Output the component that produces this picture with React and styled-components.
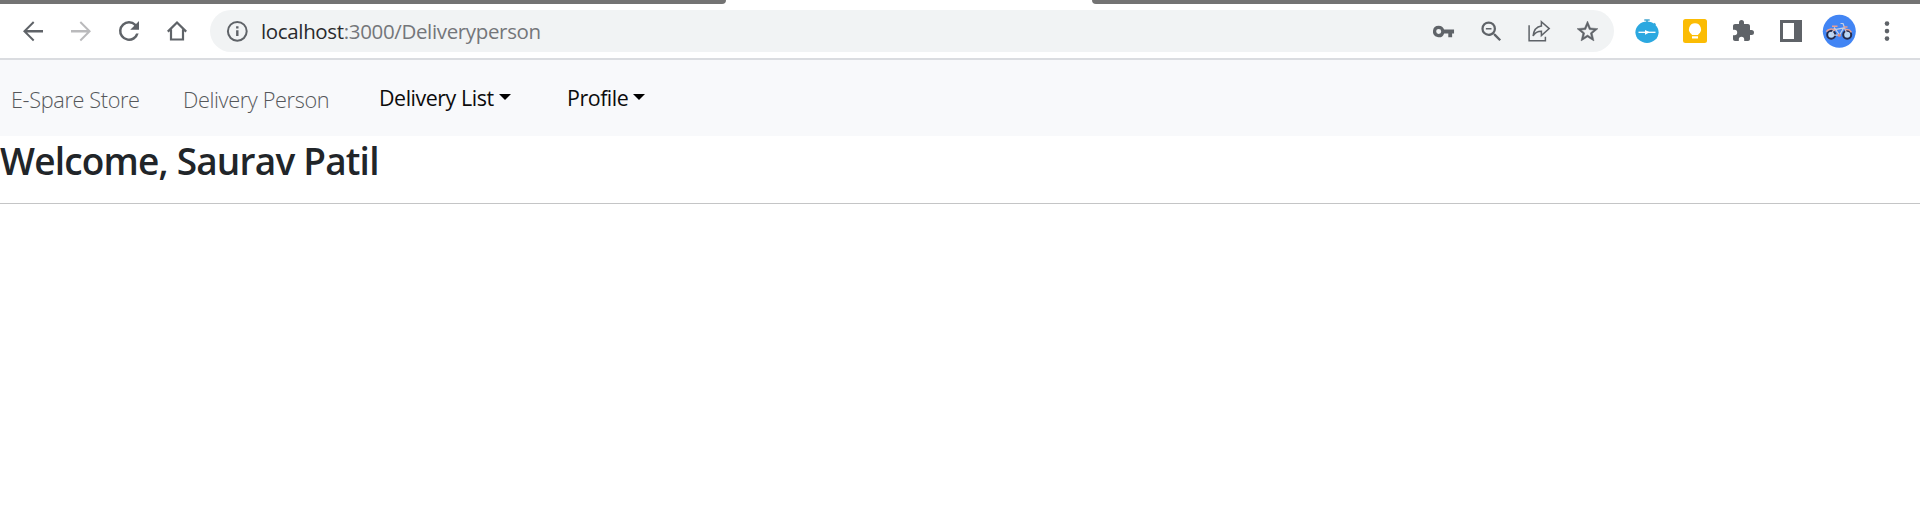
import React from "react";
import styled, { createGlobalStyle } from "styled-components";

const GlobalStyle = createGlobalStyle`
  * { box-sizing: border-box; }
  body {
    margin: 0;
    background: #fff;
    font-family: "Segoe UI", "Open Sans", "Noto Sans", sans-serif;
  }
`;

const Page = styled.div`
  display: flex;
  flex-direction: column;
  min-height: 531px;
  overflow: hidden;
`;

const TabStrip = styled.div`
  display: flex;
  height: 4px;
  background: #fff;
`;

const StripEdge = styled.div`
  width: ${(p) => p.$width}px;
  background: #737373;
  border-radius: ${(p) => (p.$side === "left" ? "0 0 5px 0" : "0 0 0 5px")};
`;

const ActiveTab = styled.div`
  flex: 1;
`;

const Toolbar = styled.header`
  display: flex;
  align-items: center;
  height: 56px;
  padding: 0 9px;
  border-bottom: 2px solid #dadce0;
`;

const Slot = styled.span`
  display: flex;
  flex: none;
  align-items: center;
  justify-content: center;
  width: 48px;
  height: 42px;
  color: ${(p) => (p.$muted ? "#bababc" : "#5f6368")};
  svg { display: block; overflow: visible; }
`;

const AddressBar = styled.div`
  display: flex;
  flex: 1;
  align-items: center;
  height: 42px;
  margin: 0 9px;
  padding: 0 3px;
  border-radius: 21px;
  background: #f1f3f4;
`;

const Url = styled.span`
  flex: 1;
  font-size: 20.5px;
  letter-spacing: ${(p) => p.$spacing}px;
  line-height: 42px;
  white-space: nowrap;
  color: #74767a;
`;

const Host = styled.span`
  color: #292a2d;
`;

const Navbar = styled.nav`
  display: flex;
  align-items: center;
  height: 76px;
  padding-left: 11px;
  background: #f8f9fb;
`;

const NavText = styled.span`
  width: ${(p) => p.$width}px;
  padding-top: 3px;
  font-size: 21.7px;
  font-weight: 300;
  letter-spacing: ${(p) => p.$spacing}px;
  line-height: 32px;
  white-space: nowrap;
  color: #55575a;
`;

const NavMenu = styled.a`
  display: flex;
  align-items: center;
  width: ${(p) => p.$width}px;
  padding-bottom: 1px;
  font-size: 21.4px;
  font-weight: 400;
  letter-spacing: ${(p) => p.$spacing}px;
  line-height: 32px;
  white-space: nowrap;
  color: #0c0c0c;
  &::after {
    content: "";
    margin: 0 0 1px 5px;
    border: 6.5px solid transparent;
    border-top-color: #000;
    border-bottom: 0;
  }
`;

const Heading = styled.h2`
  height: 68px;
  margin: 0;
  border-bottom: 1px solid #c4c5c6;
  font-size: 37px;
  font-weight: 600;
  letter-spacing: ${(p) => p.$spacing}px;
  line-height: 49px;
  white-space: nowrap;
  color: #212529;
`;

const Glyph = ({ d, size = 30, weight = 0 }) => (
  <svg width={size} height={size} viewBox="0 0 24 24" fill="currentColor" stroke="currentColor" strokeWidth={weight}>
    <path d={d} />
  </svg>
);

const paths = {
  back: "M20 11.2H7.3l5.8-5.8L12 4.2 4 12.2l8 8 1.1-1.2-5.8-5.9H20z",
  forward: "M4 11.2h12.7l-5.8-5.8L12 4.2l8 8-8 8-1.1-1.2 5.8-5.9H4z",
  reload:
    "M17.65 6.35A7.96 7.96 0 0 0 12 4a8 8 0 1 0 7.73 10h-2.08A6 6 0 1 1 12 6c1.66 0 3.14.69 4.22 1.78L13 11h7V4z",
  key: "M12.65 10A5.99 5.99 0 0 0 7 6a6 6 0 1 0 5.65 8H17v4h4v-4h2v-4zM7 14.6a2.6 2.6 0 1 1 0-5.2 2.6 2.6 0 0 1 0 5.2z",
  zoomOut:
    "M15.5 14h-.79l-.28-.27A6.47 6.47 0 0 0 16 9.5 6.5 6.5 0 1 0 9.5 16c1.61 0 3.09-.59 4.23-1.57l.27.28v.79l5 4.99L20.49 19zm-6 0A4.5 4.5 0 1 1 9.5 5a4.5 4.5 0 0 1 0 9zM7 8.8h5v1.4H7z",
  star: "M22 9.24l-7.19-.62L12 2 9.19 8.63 2 9.24l5.46 4.73L5.82 21 12 17.27 18.18 21l-1.63-7.03zM12 15.4l-3.76 2.27 1-4.28-3.32-2.88 4.38-.38L12 6.1l1.71 4.04 4.38.38-3.32 2.88 1 4.28z",
  puzzle:
    "M20.5 11H19V7c0-1.1-.9-2-2-2h-4V3.5a2.5 2.5 0 0 0-5 0V5H4c-1.1 0-1.99.9-1.99 2v3.8H3.5a2.7 2.7 0 0 1 0 5.4H2V20c0 1.1.9 2 2 2h3.8v-1.5a2.7 2.7 0 0 1 5.4 0V22H17c1.1 0 2-.9 2-2v-4h1.5a2.5 2.5 0 0 0 0-5z",
};

const HomeIcon = () => (
  <svg width="20" height="20" viewBox="0 0 20 20" fill="none" stroke="currentColor" strokeWidth="2.2">
    <path d="M.8 10.6 10 1.5l9.2 9.1M4 8.5v10h12v-10" />
  </svg>
);

const InfoIcon = () => (
  <svg width="22" height="22" viewBox="0 0 22 22" fill="none" stroke="currentColor" strokeWidth="2">
    <circle cx="11.3" cy="11.3" r="9.4" />
    <path d="M11.3 10.3v5.6M11.3 6.2v2.3" strokeWidth="2.4" />
  </svg>
);

const ShareIcon = () => (
  <svg width="24" height="22" viewBox="0 0 24 22" fill="none" stroke="currentColor" strokeWidth="1.5">
    <path d="M2.1 5.2v15.6h16.3v-4.1" />
    <path d="M14.4 1.7 22.2 8.6 14.4 15.5v-4.2C10.7 11.3 8 12.6 6.1 16c.5-5.2 3.5-9.3 8.3-10z" />
  </svg>
);

const StopwatchIcon = () => (
  <svg width="24" height="24" viewBox="0 0 24 24">
    <path d="M9.3 1h5.4M12 1v3M19 4.4l1.5 1.4" stroke="#45a6cf" strokeWidth="1.6" />
    <ellipse cx="12" cy="13.3" rx="11.6" ry="10.7" fill="#2ba8e0" />
    <path d="M3.5 13.3h17" stroke="#fff" strokeWidth="1.3" />
    <path d="m10 10.9 4.8 2.4-4.8 2.4z" fill="#fff" />
  </svg>
);

const KeepIcon = () => (
  <svg width="24" height="24" viewBox="0 0 24 24">
    <rect width="24" height="24" rx="2.5" fill="#fbbc04" />
    <path d="M12 4.3a6 6 0 0 0-3.3 11V16h6.6v-.7a6 6 0 0 0-3.3-11zM9 17.3h6v2.1H9z" fill="#fff" />
  </svg>
);

const PanelIcon = () => (
  <svg width="22" height="22" viewBox="0 0 22 22" fill="currentColor">
    <path d="M0 0h22v22H0zM3 3v16h11V3z" fillRule="evenodd" />
  </svg>
);

const BikeAvatar = () => (
  <svg width="34" height="34" viewBox="0 0 34 34" fill="none">
    <circle cx="17.3" cy="17.3" r="16.5" fill="#4285f4" />
    <g fill="#b9d9f8" stroke="#252b4c" strokeWidth="2">
      <circle cx="9.2" cy="20.8" r="4" />
      <circle cx="25.2" cy="20.8" r="4" />
    </g>
    <path d="M9.2 20.8 12.5 14l5 7.2 4.2-7.4-8.7 1.8M17.5 21.2H9.2M25.2 20.8 21 9.5h-2.5" stroke="#c6cfe4" strokeWidth="1.2" />
    <path d="M10 12.3h5.5M21.5 13h4M4.3 17.6c2-2.8 6-3.4 8.8-1M23 15.8c2.5-.7 5 .2 6.5 2.5" stroke="#e9a091" strokeWidth="1.5" />
    <circle cx="17.3" cy="21.3" r="1.5" fill="#e58b7b" />
  </svg>
);

const DotsIcon = () => (
  <svg width="6" height="20" viewBox="0 0 6 20" fill="currentColor">
    <circle cx="3" cy="2.6" r="2.3" />
    <circle cx="3" cy="10.1" r="2.3" />
    <circle cx="3" cy="17.6" r="2.3" />
  </svg>
);

export default function App() {
  return (
    <Page>
      <GlobalStyle />
      <TabStrip>
        <StripEdge $width={726} $side="left" />
        <ActiveTab />
        <StripEdge $width={828} $side="right" />
      </TabStrip>
      <Toolbar>
        <Slot><Glyph d={paths.back} /></Slot>
        <Slot $muted><Glyph d={paths.forward} /></Slot>
        <Slot><Glyph d={paths.reload} /></Slot>
        <Slot><HomeIcon /></Slot>
        <AddressBar>
          <Slot><InfoIcon /></Slot>
          <Url $spacing={-0.35}><Host>localhost</Host>:3000/Deliveryperson</Url>
          <Slot><Glyph d={paths.key} size={23} /></Slot>
          <Slot><Glyph d={paths.zoomOut} size={27} /></Slot>
          <Slot><ShareIcon /></Slot>
          <Slot><Glyph d={paths.star} size={25} weight={0.5} /></Slot>
        </AddressBar>
        <Slot><StopwatchIcon /></Slot>
        <Slot><KeepIcon /></Slot>
        <Slot><Glyph d={paths.puzzle} size={24} /></Slot>
        <Slot><PanelIcon /></Slot>
        <Slot><BikeAvatar /></Slot>
        <Slot><DotsIcon /></Slot>
      </Toolbar>
      <Navbar>
        <NavText $width={172} $spacing={-0.36}>E-Spare Store</NavText>
        <NavText $width={196} $spacing={-0.36}>Delivery Person</NavText>
        <NavMenu $width={188} $spacing={-0.45}>Delivery List</NavMenu>
        <NavMenu $width={90} $spacing={-0.45}>Profile</NavMenu>
      </Navbar>
      <Heading $spacing={-0.8}>Welcome, Saurav Patil</Heading>
    </Page>
  );
}
